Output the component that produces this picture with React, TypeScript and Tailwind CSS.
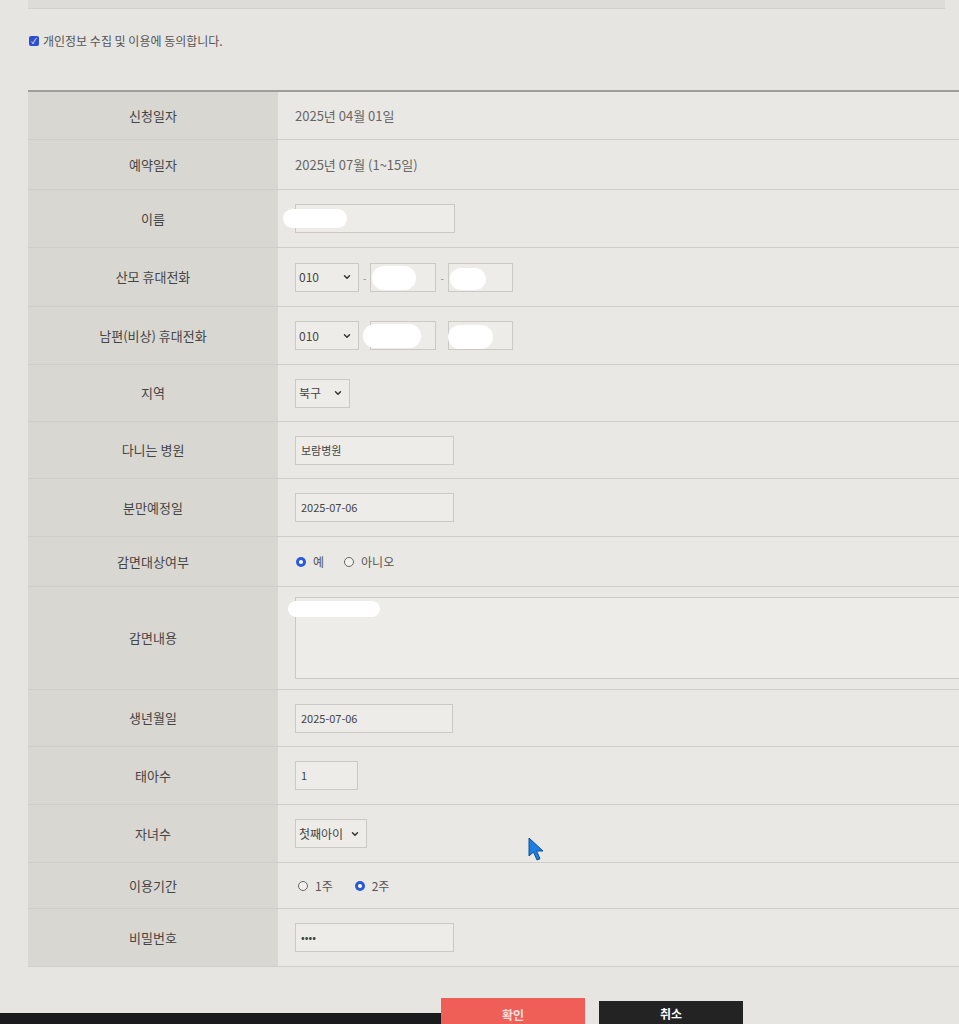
import { ChevronDown } from 'lucide-react';
import type { ReactNode } from 'react';

const FONT = { fontFamily: '"Noto Sans CJK KR", "Noto Sans", sans-serif' };

function Blob({ className }: { className: string }) {
  return <span className={`absolute rounded-full bg-white ${className}`} />;
}

function Field({ w, children }: { w: string; children?: ReactNode }) {
  return (
    <div className={`flex h-[29px] items-center border border-[#cbc9c5] bg-[#eeece9] px-[5px] text-[11px] text-[#444] ${w}`}>
      {children}
    </div>
  );
}

function Select({ w, value }: { w: string; value: string }) {
  return (
    <div className={`flex h-[29px] items-center justify-between border border-[#cbc9c5] bg-[#eeece9] pl-[3px] pr-[6px] text-[12px] text-[#444] ${w}`}>
      <span>{value}</span>
      <ChevronDown size={10} strokeWidth={3.5} className="text-[#333]" />
    </div>
  );
}

function Radio({ checked, label }: { checked?: boolean; label: string }) {
  return (
    <span className="flex items-center gap-[7px] text-[12px] text-[#555]">
      {checked ? (
        <span className="flex h-[10px] w-[10px] items-center justify-center rounded-full bg-[#2a5bd7]">
          <span className="h-[4px] w-[4px] rounded-full bg-white" />
        </span>
      ) : (
        <span className="h-[10px] w-[10px] rounded-full border border-[#666] bg-[#f2f1ee]" />
      )}
      {label}
    </span>
  );
}

type Row = { label: string; h: string; content: ReactNode };

const rows: Row[] = [
  { label: '신청일자', h: 'h-[48px]', content: <span className="text-[13px] text-[#666]">2025년 04월 01일</span> },
  { label: '예약일자', h: 'h-[50px]', content: <span className="text-[13px] text-[#666]">2025년 07월 (1~15일)</span> },
  {
    label: '이름',
    h: 'h-[58px]',
    content: (
      <>
        <Field w="w-[160px]" />
        <Blob className="left-[5px] top-[19px] h-[19px] w-[64px]" />
      </>
    ),
  },
  {
    label: '산모 휴대전화',
    h: 'h-[59px]',
    content: (
      <>
        <div className="flex items-center gap-[4px] text-[10px] text-[#888]">
          <Select w="w-[64px]" value="010" />
          <span>-</span>
          <Field w="w-[66px]" />
          <span>-</span>
          <Field w="w-[65px]" />
        </div>
        <Blob className="left-[94px] top-[18px] h-[24px] w-[44px]" />
        <Blob className="left-[172px] top-[20px] h-[22px] w-[36px]" />
      </>
    ),
  },
  {
    label: '남편(비상) 휴대전화',
    h: 'h-[58px]',
    content: (
      <>
        <div className="flex items-center gap-[4px] text-[10px] text-transparent">
          <Select w="w-[64px]" value="010" />
          <span>-</span>
          <Field w="w-[66px]" />
          <span>-</span>
          <Field w="w-[65px]" />
        </div>
        <Blob className="left-[85px] top-[17px] h-[24px] w-[58px]" />
        <Blob className="left-[170px] top-[18px] h-[24px] w-[45px]" />
      </>
    ),
  },
  { label: '지역', h: 'h-[57px]', content: <Select w="w-[55px]" value="북구" /> },
  { label: '다니는 병원', h: 'h-[57px]', content: <Field w="w-[159px]">보람병원</Field> },
  { label: '분만예정일', h: 'h-[58px]', content: <Field w="w-[159px]">2025-07-06</Field> },
  {
    label: '감면대상여부',
    h: 'h-[50px]',
    content: (
      <div className="flex items-center gap-[20px] pl-[1px]">
        <Radio checked label="예" />
        <Radio label="아니오" />
      </div>
    ),
  },
  {
    label: '감면내용',
    h: 'h-[103px]',
    content: (
      <>
        <div className="h-[82px] flex-1 border border-[#cbc9c5] border-r-0 bg-[#eeece9]" />
        <Blob className="left-[10px] top-[14px] h-[16px] w-[92px]" />
      </>
    ),
  },
  { label: '생년월일', h: 'h-[57px]', content: <Field w="w-[158px]">2025-07-06</Field> },
  { label: '태아수', h: 'h-[58px]', content: <Field w="w-[63px]">1</Field> },
  { label: '자녀수', h: 'h-[58px]', content: <Select w="w-[72px]" value="첫째아이" /> },
  {
    label: '이용기간',
    h: 'h-[46px]',
    content: (
      <div className="flex items-center gap-[22px] pl-[3px]">
        <Radio label="1주" />
        <Radio checked label="2주" />
      </div>
    ),
  },
  { label: '비밀번호', h: 'h-[58px]', content: <Field w="w-[159px]">••••</Field> },
];

export default function App() {
  return (
    <div className="relative h-[1024px] w-[959px] overflow-hidden bg-[#e7e5e1]" style={FONT}>
      <div className="ml-[28px] mr-[14px] h-[9px] border-b border-[#d3d1cd] bg-[#dedcd8]" />

      <label className="ml-[29px] mt-[23px] flex items-center gap-[4px] text-[12px] text-[#555]">
        <span className="flex h-[10px] w-[10px] items-center justify-center rounded-[2px] bg-[#2a4fd0] text-[8px] leading-none text-white">✓</span>
        개인정보 수집 및 이용에 동의합니다.
      </label>

      <div className="ml-[28px] mt-[40px] border-t-2 border-[#a19e9a]">
        {rows.map((row) => (
          <div key={row.label} className={`flex border-b border-[#d0ceca] ${row.h}`}>
            <div className="flex w-[250px] shrink-0 items-center justify-center bg-[#d9d7d2] text-[13px] text-[#444]">
              {row.label}
            </div>
            <div className="relative flex flex-1 items-center bg-[#eae8e4] pl-[17px]">{row.content}</div>
          </div>
        ))}
      </div>

      <div className="mt-[31px] flex gap-[14px] pl-[441px]">
        <div className="relative z-10 flex h-[27px] w-[144px] items-start justify-center bg-[#ef5f58] pt-[10px] text-[12px] font-bold leading-[14px] text-[#fbe2e0]">
          확인
        </div>
        <div className="relative z-10 mt-[3px] flex h-[24px] w-[144px] items-start justify-center bg-[#232323] pt-[6px] text-[12px] font-bold leading-[14px] text-white">
          취소
        </div>
      </div>

      <div className="absolute bottom-0 left-0 h-[11px] w-[441px] bg-[#1b1b1d]" />

      <svg className="absolute left-[528px] top-[837px]" width="18" height="24" viewBox="0 0 18 24">
        <path d="M1 1 L1 19 L5.5 15 L9 23 L12 21.8 L8.6 14 L15 14 Z" fill="#1f7fe0" stroke="#0d4f9a" strokeWidth="1" />
      </svg>
    </div>
  );
}
